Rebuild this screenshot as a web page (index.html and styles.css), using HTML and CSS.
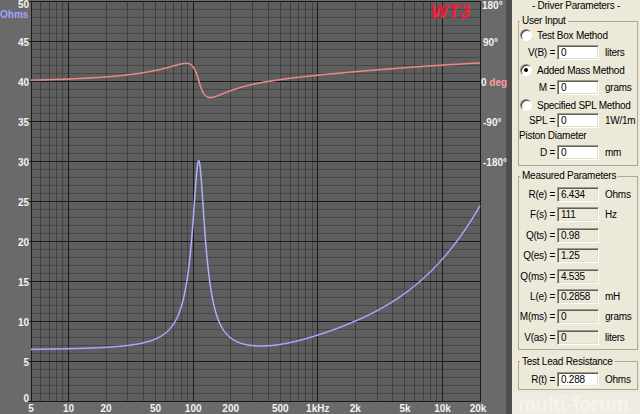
FILE: index.html
```html
<!DOCTYPE html>
<html lang="en">
<head>
<meta charset="utf-8">
<title>WT3 - Driver Parameters</title>
<link rel="stylesheet" href="styles.css">
</head>
<body>
<div class="app">
  <section class="chart">
    <svg class="graph" width="512" height="414" viewBox="0 0 512 414" xmlns="http://www.w3.org/2000/svg">
      <defs>
        <clipPath id="plotclip"><rect x="31" y="1.5" width="450" height="400"/></clipPath>
      </defs>
      <rect class="axis-bg" x="0" y="0" width="512" height="414"/>
      <rect class="divider" x="506" y="0" width="6" height="414"/>
      <rect class="plot-bg" x="31.5" y="1.5" width="449" height="400"/>
      <g id="grid"></g>
      <rect class="frame" x="31.5" y="1.5" width="449" height="400"/>
      <g clip-path="url(#plotclip)">
        <path id="pOuter" class="p-outer" d=""/>
        <path id="pInner" class="p-inner" d=""/>
        <path id="zOuter" class="z-outer" d=""/>
        <path id="zInner" class="z-inner" d=""/>
      </g>

      <text class="wt3" x="431" y="18">WT3</text>

      <g class="ax ax-l">
        <text x="29" y="8">50</text>
        <text x="29" y="46">45</text>
        <text x="29" y="86">40</text>
        <text x="29" y="126">35</text>
        <text x="29" y="166">30</text>
        <text x="29" y="206">25</text>
        <text x="29" y="246">20</text>
        <text x="29" y="286">15</text>
        <text x="29" y="326">10</text>
        <text x="29" y="366">5</text>
        <text x="29" y="401.5">0</text>
      </g>
      <text class="ax ohms" x="0" y="18">Ohms</text>

      <g class="ax">
        <text x="482" y="9">180°</text>
        <text x="483" y="46">90°</text>
        <text x="481" y="86">0 <tspan class="deg">deg</tspan></text>
        <text x="483" y="126">-90°</text>
        <text x="483" y="166">-180°</text>
      </g>

      <g class="ax ax-b">
        <text x="31" y="412">5</text>
        <text x="68.5" y="412">10</text>
        <text x="106" y="412">20</text>
        <text x="155.6" y="412">50</text>
        <text x="193.2" y="412">100</text>
        <text x="230.7" y="412">200</text>
        <text x="280.3" y="412">500</text>
        <text x="317.8" y="412">1kHz</text>
        <text x="355.3" y="412">2k</text>
        <text x="405" y="412">5k</text>
        <text x="442.5" y="412">10k</text>
        <text x="478" y="412">20k</text>
      </g>
    </svg>
  </section>

  <aside class="panel">
    <div class="title">- Driver Parameters -</div>

    <fieldset class="group user">
      <legend>User Input</legend>
      <div class="stack">
        <div class="radio"><span class="dot"></span>Test Box Method</div>
        <div class="row"><span class="lbl">V(B) =</span><span class="box edit">0</span><span class="unit">liters</span></div>
        <div class="radio"><span class="dot on"></span>Added Mass Method</div>
        <div class="row"><span class="lbl">M =</span><span class="box edit">0</span><span class="unit">grams</span></div>
        <div class="radio"><span class="dot"></span>Specified SPL Method</div>
        <div class="row snug"><span class="lbl">SPL =</span><span class="box edit">0</span><span class="unit">1W/1m</span></div>
        <div class="caption">Piston Diameter</div>
        <div class="row"><span class="lbl">D =</span><span class="box edit">0</span><span class="unit">mm</span></div>
      </div>
    </fieldset>

    <fieldset class="group measured">
      <legend>Measured Parameters</legend>
      <div class="stack">
        <div class="row"><span class="lbl">R(e) =</span><span class="box">6.434</span><span class="unit">Ohms</span></div>
        <div class="row"><span class="lbl">F(s) =</span><span class="box">111</span><span class="unit">Hz</span></div>
        <div class="row"><span class="lbl">Q(ts) =</span><span class="box">0.98</span><span class="unit"></span></div>
        <div class="row"><span class="lbl">Q(es) =</span><span class="box">1.25</span><span class="unit"></span></div>
        <div class="row"><span class="lbl">Q(ms) =</span><span class="box">4.535</span><span class="unit"></span></div>
        <div class="row"><span class="lbl">L(e) =</span><span class="box">0.2858</span><span class="unit">mH</span></div>
        <div class="row"><span class="lbl">M(ms) =</span><span class="box">0</span><span class="unit">grams</span></div>
        <div class="row"><span class="lbl">V(as) =</span><span class="box">0</span><span class="unit">liters</span></div>
      </div>
    </fieldset>

    <fieldset class="group lead">
      <legend>Test Lead Resistance</legend>
      <div class="stack">
        <div class="row"><span class="lbl">R(t) =</span><span class="box edit">0.288</span><span class="unit">Ohms</span></div>
      </div>
    </fieldset>

    <div class="watermark">multi-forum</div>
  </aside>
</div>
<script src="script.js"></script>
</body>
</html>
```

FILE: styles.css
```css
* { box-sizing: border-box; }

html, body {
  margin: 0;
  padding: 0;
}

body {
  width: 640px;
  height: 414px;
  overflow: hidden;
  background: #ece9d8;
}

.app {
  display: flex;
  width: 640px;
  height: 414px;
}

/* ---------- chart ---------- */
.chart {
  flex: none;
  width: 512px;
  height: 414px;
  background: #6a6a6a;
}

.graph { display: block; }

.axis-bg { fill: #6a6a6a; }
.divider { fill: #4e4e4e; }
.plot-bg { fill: #5e5e5e; }

.g-minor-h { stroke: #474747; stroke-width: 1; }
.g-minor-v { stroke: #404040; stroke-width: 1; }
.g-major { stroke: #1a1a1a; stroke-width: 1; }
.frame { fill: none; stroke: #1a1a1a; stroke-width: 1; }

.z-outer { fill: none; stroke: #7c7cd0; stroke-width: 1.8; stroke-linejoin: round; }
.z-inner { fill: none; stroke: #cfcfff; stroke-width: 0.8; stroke-linejoin: round; }
.p-outer { fill: none; stroke: #c06464; stroke-width: 1.8; stroke-linejoin: round; }
.p-inner { fill: none; stroke: #f4b4b4; stroke-width: 0.8; stroke-linejoin: round; }

.ax {
  font-family: "Liberation Sans", Arial, sans-serif;
  font-weight: bold;
  font-size: 10px;
  fill: #f2f2f2;
}
.ax-l { text-anchor: end; }
.ax-b { text-anchor: middle; }
.ohms { fill: #a2a2ff; }
.deg { fill: #ff9c9c; }

.wt3 {
  font-family: "Liberation Sans", Arial, sans-serif;
  font-style: italic;
  font-weight: bold;
  font-size: 18px;
  letter-spacing: 0.5px;
  fill: #ff1838;
}

/* ---------- parameter panel ---------- */
.panel {
  flex: none;
  width: 128px;
  height: 414px;
  display: flex;
  flex-direction: column;
  background: #ece9d8;
  color: #000;
  font-family: "Liberation Sans", Arial, sans-serif;
  font-size: 10px;
  letter-spacing: -0.25px;
}

.title {
  height: 11px;
  line-height: 11px;
  margin-bottom: 4px;
  text-align: center;
  white-space: nowrap;
}

.group {
  margin: 0 2px 0 6px;
  padding: 0;
  border: 1px solid #aca899;
  min-width: 0;
}

.group legend {
  padding: 0 2px;
  margin-left: 1px;
  height: 12px;
  line-height: 12px;
  white-space: nowrap;
}

.stack {
  display: flex;
  flex-direction: column;
}

.user .stack { gap: 3px; padding: 1px 0 5px; }
.user .snug { margin-top: -2px; }
.user .caption { margin-top: -1px; }

.measured { margin-top: 4px; }
.measured .stack { gap: 5.4px; padding: 5px 0 4px; }

.lead { margin-top: 6px; }
.lead .stack { padding: 4px 0 2px; }

.radio {
  display: flex;
  align-items: center;
  height: 14px;
  padding-left: 1px;
  white-space: nowrap;
}

.dot {
  position: relative;
  flex: none;
  width: 12px;
  height: 12px;
  margin-right: 5px;
  border-radius: 50%;
  border: 1px solid;
  border-color: #8a877a #fff #fff #8a877a;
  background: #fff;
  box-shadow: inset 1px 1px 0 #45433c;
}

.dot.on::after {
  content: "";
  position: absolute;
  left: 3px;
  top: 3px;
  width: 4px;
  height: 4px;
  border-radius: 50%;
  background: #000;
}

.caption {
  height: 12px;
  line-height: 12px;
  white-space: nowrap;
}

.row {
  display: grid;
  grid-template-columns: 37px 42px auto;
  column-gap: 1px;
  align-items: center;
  height: 15px;
}

.lbl {
  justify-self: end;
  padding-right: 1px;
  white-space: nowrap;
}

.box {
  height: 15px;
  padding-left: 3px;
  line-height: 13px;
  border: 1px solid;
  border-color: #9d9a8c #fff #fff #9d9a8c;
  box-shadow: inset 1px 1px 0 #5f5d55, inset -1px -1px 0 #e2dfd0;
  background: #ece9d8;
  white-space: nowrap;
  overflow: hidden;
}

.box.edit { background: #fff; }

.unit {
  margin-left: 5px;
  white-space: nowrap;
}

.watermark {
  flex: 1;
  margin-top: 3px;
  padding-left: 6px;
  background: #eeece3;
  color: #f5f4ee;
  font-size: 20px;
  font-weight: bold;
  line-height: 22px;
  letter-spacing: 0;
  overflow: hidden;
  white-space: nowrap;
}
```

FILE: script.js
```js
(function () {
  var NS = 'http://www.w3.org/2000/svg';
  var L = 31, R = 480, TOP = 1.5, BOT = 401.5;
  var DEC = (R - L) / Math.log10(4000);

  function fx(f) { return L + DEC * Math.log10(f / 5); }
  function vy(v) { return BOT - 8 * v; }

  var grid = document.getElementById('grid');
  function line(x1, y1, x2, y2, cls) {
    var el = document.createElementNS(NS, 'line');
    el.setAttribute('x1', x1);
    el.setAttribute('y1', y1);
    el.setAttribute('x2', x2);
    el.setAttribute('y2', y2);
    el.setAttribute('class', cls);
    grid.appendChild(el);
  }

  var v, d, m, f, x;
  // minor horizontals (every ohm)
  for (v = 1; v < 50; v++) {
    if (v % 5 !== 0) line(31.5, vy(v), 480.5, vy(v), 'g-minor-h');
  }
  // minor verticals (2..9 in each decade)
  for (d = 1; d <= 10000; d *= 10) {
    for (m = 2; m <= 9; m++) {
      f = d * m;
      if (f <= 5 || f >= 20000) continue;
      x = Math.floor(fx(f)) + 0.5;
      line(x, TOP, x, BOT, 'g-minor-v');
    }
  }
  // decade verticals
  [10, 100, 1000, 10000].forEach(function (fd) {
    var xx = Math.floor(fx(fd)) + 0.5;
    line(xx, TOP, xx, BOT, 'g-major');
  });
  // major horizontals (every 5 ohms)
  for (v = 0; v <= 50; v += 5) {
    line(28, vy(v), 480.5, vy(v), 'g-major');
  }

  // impedance model from the measured parameters
  var Re = 6.434, fs = 111, Qms = 4.535, Qes = 1.25;
  var Res = Re * Qms / Qes;
  var n = 0.6, K = 0.017567;
  var cn = Math.cos(n * Math.PI / 2), sn = Math.sin(n * Math.PI / 2);
  var N = 900, zd = [], pd = [];
  for (var i = 0; i <= N; i++) {
    f = 5 * Math.pow(4000, i / N);
    var w = 2 * Math.PI * f;
    var a = Qms * (f / fs - fs / f);
    var den = 1 + a * a;
    var k = K * Math.pow(w, n);
    var zr = Re + Res / den + k * cn;
    var zi = -Res * a / den + k * sn;
    var lf = (Math.log10(f) - Math.log10(400)) / 0.5;
    var mag = Math.hypot(zr, zi) - 0.7 * Math.exp(-lf * lf);
    var ph = Math.atan2(zi, zr) * 180 / Math.PI;
    var px = fx(f).toFixed(2);
    zd.push((i ? 'L' : 'M') + px + ' ' + vy(mag).toFixed(2));
    pd.push((i ? 'L' : 'M') + px + ' ' + vy(40 + ph / 18).toFixed(2));
  }
  var zs = zd.join(''), ps = pd.join('');
  document.getElementById('zOuter').setAttribute('d', zs);
  document.getElementById('zInner').setAttribute('d', zs);
  document.getElementById('pOuter').setAttribute('d', ps);
  document.getElementById('pInner').setAttribute('d', ps);
})();
```
